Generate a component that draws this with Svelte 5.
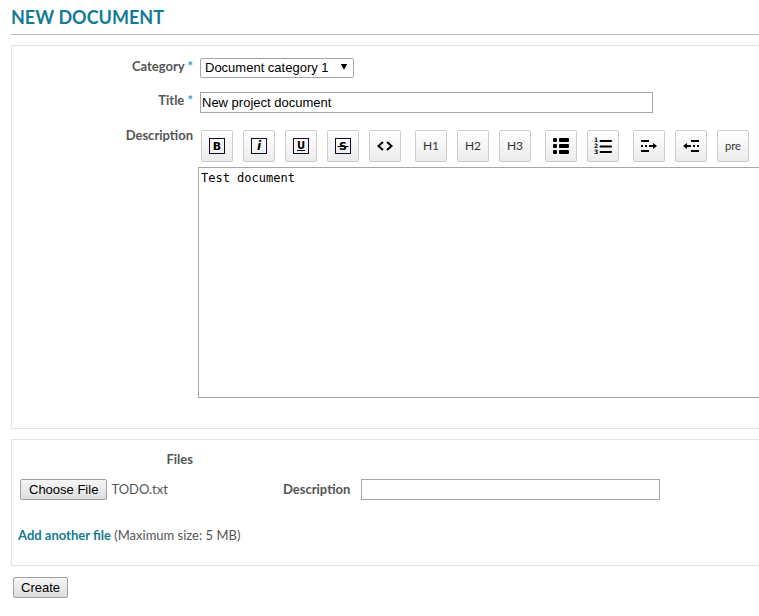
<script>
  let category = $state('Document category 1');
  let title = $state('New project document');
  let body = $state('Test document');
  let fileName = $state('TODO.txt');
  let fileNote = $state('');
  let picker;

  const groups = [
    ['bold', 'italic', 'underline', 'strike', 'code'],
    ['H1', 'H2', 'H3'],
    ['bullets', 'numbers'],
    ['indent', 'outdent', 'pre']
  ];
  const letters = { bold: 'B', italic: 'i', underline: 'U', strike: 'S' };

  function picked(event) {
    const file = event.currentTarget.files[0];
    if (file) fileName = file.name;
  }
</script>

{#snippet icon(name)}
  <svg width="18" height="18" viewBox="0 0 18 18" fill="none" stroke="#000" aria-hidden="true">
    {#if letters[name]}
      <rect x="1.5" y="1.5" width="15" height="15" stroke="#1a0828" />
      <text class="letter {name}" x="9" y={name === 'underline' ? 12 : 13} text-anchor="middle">{letters[name]}</text>
      {#if name === 'underline'}
        <path d="M5 13.5H13" />
      {:else if name === 'strike'}
        <path d="M3.5 9.5H14.5" />
      {/if}
    {:else if name === 'code'}
      <path d="M7 5L2.5 9L7 13M11 5L15.5 9L11 13" stroke-width="2" />
    {:else if name === 'bullets'}
      <g fill="#000" stroke="none">
        {#each [1, 7, 13] as y}
          <rect x="1" {y} width="4" height="4" rx="1" />
          <rect x="7" {y} width="10" height="4" rx="1" />
        {/each}
      </g>
    {:else if name === 'numbers'}
      <path d="M6.5 4H17M6.5 9.5H17M6.5 15H17" stroke-width="2" stroke-linecap="round" />
      <text class="digit" x="0" y="5">1</text>
      <text class="digit" x="0" y="11">2</text>
      <text class="digit" x="0" y="17">3</text>
    {:else if name === 'indent'}
      <path d="M1 4H9M1 9H3M5 9H7M9 9H15M1 14H9" stroke-width="2" />
      <path d="M13 6L17 9L13 12Z" fill="#000" stroke="none" />
    {:else if name === 'outdent'}
      <path d="M9 4H17M3 9H9M11 9H13M15 9H17M9 14H17" stroke-width="2" />
      <path d="M5 6L1 9L5 12Z" fill="#000" stroke="none" />
    {/if}
  </svg>
{/snippet}

<main>
  <h1>New document</h1>

  <section class="panel details">
    <div class="row">
      <label for="category">Category <b>*</b></label>
      <div class="pick">
        <select id="category" bind:value={category}>
          <option>Document category 1</option>
        </select>
        <svg width="6" height="6" viewBox="0 0 6 6" aria-hidden="true"><path d="M0 0H6L3 6Z" /></svg>
      </div>
    </div>
    <div class="row">
      <label for="title">Title <b>*</b></label>
      <input id="title" class="title" type="text" bind:value={title} />
    </div>
    <div class="row wide">
      <label for="description">Description</label>
      <div class="editor">
        <div class="toolbar" role="toolbar" aria-label="Formatting">
          {#each groups as group}
            <div class="group">
              {#each group as tool}
                <button type="button" class="tool" class:small={tool === 'pre'} aria-label={tool}>
                  {#if tool.startsWith('H') || tool === 'pre'}
                    {tool}
                  {:else}
                    {@render icon(tool)}
                  {/if}
                </button>
              {/each}
            </div>
          {/each}
        </div>
        <textarea id="description" bind:value={body}></textarea>
      </div>
    </div>
  </section>

  <section class="panel files">
    <h2>Files</h2>
    <div class="file-row">
      <div class="chosen">
        <input type="file" hidden bind:this={picker} onchange={picked} aria-label="File" />
        <button type="button" class="native" onclick={() => picker.click()}>Choose File</button>
        <span>{fileName}</span>
      </div>
      <label for="note">Description</label>
      <input id="note" class="note" type="text" bind:value={fileNote} />
    </div>
    <p><a href="#add">Add another file</a> (Maximum size: 5 MB)</p>
  </section>

  <button type="submit" class="native create">Create</button>
</main>

<style>
  :global(body) {
    margin: 0;
    background: #fff;
  }
  main {
    padding: 7px 0 18px 11px;
    font: 13px/20px Lato, sans-serif;
    color: #555;
  }
  * {
    box-sizing: border-box;
  }
  h1 {
    margin: 0 0 10px;
    padding-bottom: 6px;
    border-bottom: 1px solid #bbb;
    font-size: 18px;
    line-height: 21px;
    font-weight: 700;
    text-transform: uppercase;
    color: #137c92;
  }
  .panel {
    border: 1px solid #e4e4e4;
    border-right: 0;
    margin-bottom: 10px;
  }
  .details {
    padding: 12px 0 30px;
  }
  .row {
    display: flex;
    align-items: flex-start;
    gap: 7px;
    margin-bottom: 14px;
  }
  .row > label {
    width: 181px;
    flex: none;
    text-align: right;
    line-height: 16px;
  }
  .wide {
    gap: 5px;
    margin: 0;
  }
  label,
  h2 {
    font-weight: 700;
  }
  label b {
    color: #3399cc;
    font-weight: 700;
  }
  input,
  select,
  .native {
    font: 13px/16px "Liberation Sans", Arial, sans-serif;
    color: #000;
  }
  .pick {
    position: relative;
    display: flex;
  }
  select {
    appearance: none;
    width: 154px;
    height: 20px;
    padding: 0 4px;
    border: 1px solid #a6a6a6;
    border-radius: 2px;
    background: #fff;
  }
  .pick svg {
    position: absolute;
    top: 6px;
    right: 7px;
    pointer-events: none;
  }
  input[type='text'] {
    height: 21px;
    padding: 1px;
    border: 1px solid #a6a6a6;
    border-radius: 0;
    background: #fff;
  }
  .title {
    width: 453px;
  }
  .editor {
    flex: 1;
    min-width: 0;
  }
  .toolbar {
    display: flex;
    gap: 14px;
    padding: 3px 3px 5px;
  }
  .group {
    display: flex;
    gap: 10px;
  }
  .tool {
    width: 32px;
    height: 32px;
    flex: none;
    display: flex;
    align-items: center;
    justify-content: center;
    padding: 0;
    border: 1px solid #ccc;
    border-radius: 2px;
    background: linear-gradient(#fff, #ececec);
    font: 12px/16px Lato, sans-serif;
    color: #333;
  }
  .small {
    font-size: 11px;
  }
  .letter,
  .digit {
    fill: #000;
    stroke: none;
  }
  .letter {
    font: 700 11px "DejaVu Sans", sans-serif;
  }
  .italic {
    font-style: italic;
    font-size: 12px;
  }
  .underline {
    font-size: 10px;
  }
  .digit {
    font: 700 6px "DejaVu Sans", sans-serif;
  }
  textarea {
    display: block;
    width: 100%;
    height: 231px;
    padding: 3px 2px;
    border: 1px solid #a6a6a6;
    border-right: 0;
    border-radius: 0;
    resize: none;
    font: 12px/15px "DejaVu Sans Mono", monospace;
    color: #000;
  }
  .files {
    padding: 9px 0 20px 6px;
  }
  h2 {
    width: 175px;
    margin: 0 0 10px;
    font-size: 13px;
    line-height: 20px;
    text-align: right;
  }
  .file-row {
    display: flex;
    margin-bottom: 25px;
  }
  .chosen {
    width: 265px;
    padding-left: 2px;
    display: flex;
    gap: 4px;
  }
  .note {
    width: 299px;
    margin-left: 11px;
  }
  .native {
    height: 21px;
    padding: 0 8px;
    border: 1px solid #a0a0a0;
    border-radius: 2px;
    background: linear-gradient(#f6f6f6, #dedede);
  }
  p {
    margin: 0;
  }
  a {
    color: #137c92;
    font-weight: 700;
    text-decoration: none;
  }
  .create {
    display: block;
    padding: 0 7px;
    margin: 11px 0 0 2px;
  }
</style>
